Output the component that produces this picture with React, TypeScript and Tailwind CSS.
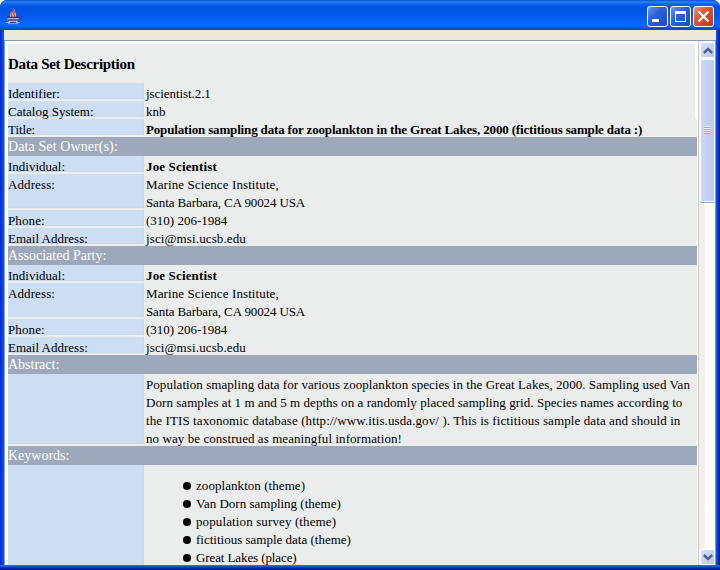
import React from "react";

function Text({ t, c }: { t: string; c: string }) {
  return <span className={"block w-max whitespace-pre " + c}>{t}</span>;
}

function Row({ label, lc, h, children }: { label?: string; lc?: string; h: string; children: React.ReactNode }) {
  return (
    <div className={"flex shrink-0 " + h}>
      <div className="mb-[2px] w-[136px] shrink-0 border-r border-b border-[#c6dbe9] bg-[#ccddf4] pt-[2px]">
        {label && <Text t={label} c={lc || ""} />}
      </div>
      <div className="min-w-0 flex-1 pt-[2px] pl-[2px]">{children}</div>
    </div>
  );
}

function Band({ t, c }: { t: string; c: string }) {
  return (
    <div className="h-[19px] shrink-0 bg-[#9da9ba] pt-[1px] text-[14px] text-white">
      <Text t={t} c={c} />
    </div>
  );
}

function Party() {
  return (
    <>
      <Row label="Individual:" h="h-[18px]"><Text t="Joe Scientist" c="font-bold tracking-[0.15px]" /></Row>
      <Row label="Address:" lc="tracking-[0.1px]" h="h-[36px]">
        <Text t="Marine Science Institute," c="tracking-[0.1px]" />
        <Text t="Santa Barbara, CA 90024 USA" c="tracking-[-0.11px]" />
      </Row>
      <Row label="Phone:" lc="tracking-[0.1px]" h="h-[18px]"><Text t="(310) 206-1984" c="" /></Row>
      <Row label="Email Address:" h="h-[18px]"><Text t="jsci@msi.ucsb.edu" c="tracking-[0.12px]" /></Row>
    </>
  );
}

function JavaIcon() {
  return (
    <svg className="ml-[6px] mt-[8px] h-[17px] w-[17px]" viewBox="0 0 17 17" fill="none">
      <path d="M7 1l2 1-1 2 2 1v4H4V6l1-2 2-1z" fill="#dba79c" />
      <path d="M7.5 0v3L5 5.5 6 9M9.5 3L7.5 5.5 9 9" stroke="#bd5745" strokeWidth="1.2" />
      <path d="M1 9h12l-1 4-2 2H4l-2-2z" fill="#dfdff3" />
      <path d="M1 9.5h12M2 12h10M4 14.3h6" stroke="#38346f" strokeWidth="1.3" />
      <path d="M12.5 8h2.5l.8 1-.8 2-3 1.5" stroke="#3a3f92" strokeWidth="1.3" />
      <path d="M0 14.5h3m8 0h3M2 15.7h10" stroke="#a5a4d6" />
    </svg>
  );
}

function Arrow({ down }: { down?: boolean }) {
  return (
    <div className="flex h-[16px] w-[15px] shrink-0 items-center justify-center rounded-[2px] border border-white bg-linear-to-br from-[#d5e1fd] to-[#b6c9f7]">
      <svg className="shrink-0" width="10" height="7" viewBox="0 0 10 7" fill="none" stroke="#4d6185" strokeWidth="2.5">
        <path d={down ? "M.9 1 5 5.1 9.1 1" : "M.9 6 5 1.9 9.1 6"} />
      </svg>
    </div>
  );
}

const KEYWORDS = [
  { t: "zooplankton (theme)", c: "tracking-[0.06px]" },
  { t: "Van Dorn sampling (theme)", c: "" },
  { t: "population survey (theme)", c: "tracking-[0.12px]" },
  { t: "fictitious sample data (theme)", c: "" },
  { t: "Great Lakes (place)", c: "tracking-[-0.1px]" },
];

export default function App() {
  return (
    <div className="flex h-[570px] w-[720px] flex-col overflow-hidden bg-white font-['Liberation_Serif',serif] text-[13px] leading-[18px] text-black">
      <div className="flex min-h-0 flex-1 flex-col overflow-hidden rounded-t-[7px] bg-[#0831d9]">
        <div className="flex h-[30px] shrink-0 bg-[linear-gradient(to_bottom,#0a50c8_0px,#2a85fb_2px,#0d63ee_4px,#0054e3_8px,#0057e8_14px,#0564fb_22px,#0366ff_26px,#0154e2_28px,#0144cc_30px)]">
          <JavaIcon />
          <div className="mt-[6px] ml-auto mr-[6px] flex gap-[2px]">
            <svg width="21" height="21" viewBox="0 0 21 21">
              <defs>
                <linearGradient id="blue" x2="1" y2="1"><stop stopColor="#6c9aef" /><stop offset=".4" stopColor="#2f62d9" /><stop offset="1" stopColor="#1648c4" /></linearGradient>
                <linearGradient id="red" x2="1" y2="1"><stop stopColor="#ed9a83" /><stop offset=".4" stopColor="#de5530" /><stop offset="1" stopColor="#bd3515" /></linearGradient>
              </defs>
              <rect x=".5" y=".5" width="20" height="20" rx="2.5" fill="url(#blue)" stroke="#fff" />
              <path d="M5 13h7v3H5z" fill="#fff" />
            </svg>
            <svg width="21" height="21" viewBox="0 0 21 21">
              <rect x=".5" y=".5" width="20" height="20" rx="2.5" fill="url(#blue)" stroke="#fff" />
              <path d="M5 5h11v11H5zM6 8v7h9V8z" fill="#fff" fillRule="evenodd" />
            </svg>
            <svg width="21" height="21" viewBox="0 0 21 21">
              <rect x=".5" y=".5" width="20" height="20" rx="2.5" fill="url(#red)" stroke="#fff" />
              <path d="M5.5 5.5l10 10m0-10l-10 10" stroke="#fff" strokeWidth="2.3" />
            </svg>
          </div>
        </div>
        <div className="flex min-h-0 flex-1">
          <div className="w-[4px] shrink-0 bg-linear-to-r from-[#001dc4] via-[#0a45e4] to-[#1257e4]" />
          <div className="flex min-w-0 flex-1 flex-col">
            <div className="h-[10px] shrink-0 bg-[#ece9d8]" />
            <div className="flex min-h-0 flex-1 border-t border-l border-[#7f9db9]">
              <div className="flex min-w-0 flex-1 flex-col bg-white pt-[3px] pr-px pl-[3px]">
                <div className="flex min-h-0 flex-1 flex-col overflow-hidden bg-[#ebeded]">
                  <div className="flex h-[75px] shrink-0 flex-col border-r-2 border-white">
                    <div className="h-[39px] shrink-0 pt-[11px] text-[15px]"><Text t="Data Set Description" c="font-bold tracking-[-0.29px]" /></div>
                    <Row label="Identifier:" h="h-[18px]"><Text t="jscientist.2.1" c="tracking-[-0.07px]" /></Row>
                    <Row label="Catalog System:" h="h-[18px]"><Text t="knb" c="" /></Row>
                  </div>
                  <Row label="Title:" lc="tracking-[-0.1px]" h="h-[18px]"><Text t="Population sampling data for zooplankton in the Great Lakes, 2000 (fictitious sample data :)" c="font-bold tracking-[-0.16px]" /></Row>
                  <Band t="Data Set Owner(s):" c="tracking-[0.1px]" />
                  <Party />
                  <Band t="Associated Party:" c="" />
                  <Party />
                  <Band t="Abstract:" c="" />
                  <Row h="h-[72px]">
                    <Text t="Population smapling data for various zooplankton species in the Great Lakes, 2000. Sampling used Van" c="tracking-[0.055px]" />
                    <Text t="Dorn samples at 1 m and 5 m depths on a randomly placed sampling grid. Species names according to" c="tracking-[0.055px]" />
                    <Text t="the ITIS taxonomic database (http://www.itis.usda.gov/ ). This is fictitious sample data and should in" c="tracking-[0.1px]" />
                    <Text t="no way be construed as meaningful information!" c="tracking-[0.07px]" />
                  </Row>
                  <Band t="Keywords:" c="" />
                  <Row h="h-[110px]">
                    <ul className="pt-[10px] pl-[37px]">
                      {KEYWORDS.map((k) => (
                        <li key={k.t} className="flex h-[18px] items-center">
                          <span className="mr-[5px] size-[8px] rounded-full bg-black" />
                          <Text t={k.t} c={k.c} />
                        </li>
                      ))}
                    </ul>
                  </Row>
                </div>
              </div>
              <div className="flex w-[18px] shrink-0 flex-col border-l border-[#d0ccbf] border-r border-r-[#7f9db9] bg-linear-to-r from-[#f3f1ec] from-35% to-[#fcfdfd] to-40% pt-px pl-px">
                <Arrow />
                <div className="mt-px flex h-[143px] w-[15px] shrink-0 flex-col items-center rounded-[2px] border border-white bg-linear-to-r from-[#c9d7fc] to-[#b9cbf8] pt-[66px] shadow-[0_1px_0_#8ba3c7]">
                  <div className="h-[8px] w-[7px] bg-[repeating-linear-gradient(to_bottom,#eef4fe_0px,#eef4fe_1px,#8cb0f8_1px,#8cb0f8_2px)]" />
                </div>
                <div className="flex-1" />
                <Arrow down />
              </div>
            </div>
          </div>
          <div className="w-[4px] shrink-0 bg-linear-to-r from-[#1257e4] via-[#0a35d4] to-[#00138c]" />
        </div>
        <div className="h-[5px] shrink-0 bg-linear-to-b from-[#3c74d8] via-[#0a35d4] to-[#00138c]" />
      </div>
    </div>
  );
}
